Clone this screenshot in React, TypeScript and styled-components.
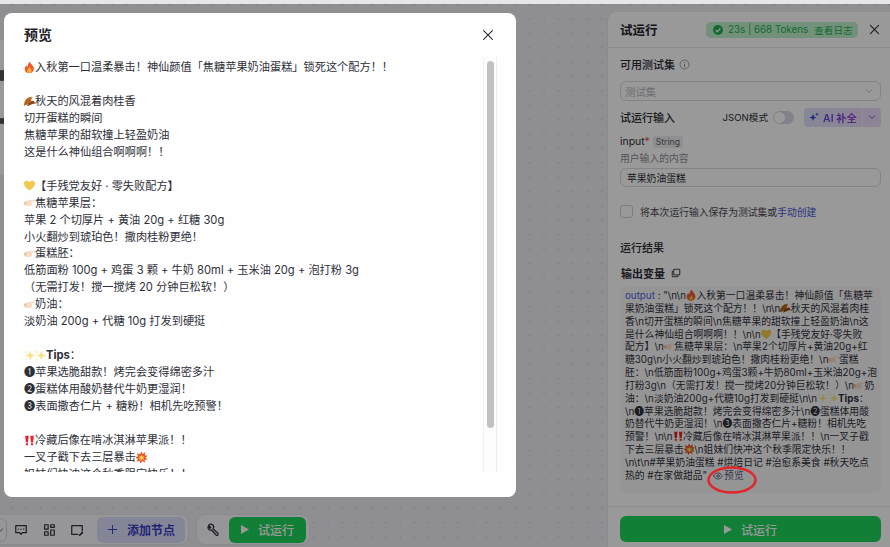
import { FC, ReactNode } from 'react'
import styled, { createGlobalStyle } from 'styled-components'

const FONT = `Inter, "Noto Sans CJK SC", sans-serif`

const GlobalStyle = createGlobalStyle`
  html, body { margin: 0; padding: 0; height: 100%; overflow: hidden; }
  body { font-family: ${FONT}; color: #1f2329; }
  * { box-sizing: border-box; }
`

const Page = styled.div`
  position: relative;
  width: 890px;
  height: 547px;
  overflow: hidden;
  background-color: #eeeef2;
  background-image: radial-gradient(#c9c9d2 0.8px, transparent 1px);
  background-size: 14.4px 14.4px;
  background-position: 4.4px 7.8px;
  border-top: 4px solid #e6e6ea;
  display: flex;
  justify-content: space-between;
  align-items: flex-end;
`

// the node that sits mostly under the modal, only its right edge shows
const CanvasNode = styled.div`
  position: absolute;
  left: -150px;
  top: 36px;
  width: 160px;
  height: 135px;
  background: #fff;
  border-radius: 6px;
`

const NodeMark = styled.span<{ $top: number; $h: number }>`
  position: absolute;
  right: 6px;
  top: ${p => p.$top}px;
  width: 4px;
  height: ${p => p.$h}px;
  background: #55565c;
  border-radius: 1px;
`

const BottomBar = styled.div`
  display: flex;
  gap: 7px;
  height: 31px;
  margin: auto 0 2px -34px;
`

const BarGroup = styled.div<{ $gap: number }>`
  display: flex;
  align-items: center;
  gap: ${p => p.$gap}px;
  padding: 0 3px 0 8px;
  background: #fbfbfd;
  border: 1px solid #e6e6ec;
  border-radius: 9px;
`

const ToolIcon = styled.span`
  display: inline-flex;
  width: 16px;
  justify-content: center;
  color: #30323a;
`

const ZoomStub = styled.span`
  width: 32px;
  height: 24px;
  margin-right: -6px;
  border: 1px solid #d8d8de;
  border-radius: 6px;
  display: flex;
  align-items: center;
  justify-content: flex-end;
  padding-right: 2px;
`

const AddNode = styled.button`
  width: 88px;
  height: 26px;
  border: none;
  border-radius: 6px;
  background: #dcdefb;
  color: #3a3fc4;
  font: 600 12px ${FONT};
  display: flex;
  align-items: center;
  justify-content: center;
  gap: 9px;
`

const RunButton = styled.button<{ $wide?: boolean }>`
  width: ${p => (p.$wide ? '261px' : '77px')};
  height: 26px;
  border: none;
  border-radius: 6px;
  background: #1fd45c;
  color: #fff;
  font: 500 12px ${FONT};
  display: flex;
  align-items: center;
  justify-content: center;
  gap: 9px;
`

const Panel = styled.aside`
  width: 283px;
  height: 535px;
  background: #fff;
  border-radius: 9px 0 0 0;
  border-left: 1px solid #e8e8ee;
  display: flex;
  flex-direction: column;
`

const PanelHeader = styled.header`
  height: 36px;
  flex: none;
  display: flex;
  align-items: center;
  padding: 0 9px 0 12px;
  border-bottom: 1px solid #ececf1;
`

const PanelTitle = styled.h2`
  flex: 1;
  margin: 0;
  font-size: 12.5px;
  font-weight: 600;
`

const StatusBadge = styled.div`
  width: 152px;
  height: 16px;
  margin-right: 10px;
  padding-left: 7px;
  border-radius: 5px;
  background: #c0f0cc;
  color: #22b350;
  font-size: 9.8px;
  display: flex;
  align-items: center;
  gap: 5px;
  white-space: nowrap;
`

const LogLink = styled.span`
  margin-left: 1px;
  font-size: 9.6px;
`

const PanelBody = styled.div`
  flex: 1;
  padding: 0 9px 0 12px;
  display: flex;
  flex-direction: column;
`

const SectionRow = styled.div<{ $top?: number }>`
  display: flex;
  align-items: center;
  margin-top: ${p => p.$top ?? 0}px;
  height: 18px;
`

const SectionLabel = styled.span`
  font-size: 11px;
  font-weight: 500;
  color: #2b2e36;
`

const InfoIcon = styled.svg`
  margin-left: 4px;
`

const SelectBox = styled.div`
  margin-top: 8px;
  height: 20px;
  border: 1px solid #dcdce2;
  border-radius: 6px;
  padding: 0 6px 0 4px;
  display: flex;
  align-items: center;
  justify-content: space-between;
  font-size: 10.4px;
  color: #b4b5bb;
`

const JsonLabel = styled.span`
  margin-left: auto;
  font-size: 9.6px;
  color: #2b2e36;
`

const Toggle = styled.span`
  position: relative;
  width: 21px;
  height: 13px;
  margin: 0 10px 0 5px;
  border-radius: 7px;
  background: #d6d8e6;

  &::after {
    content: '';
    position: absolute;
    left: 1px;
    top: 1px;
    width: 11px;
    height: 11px;
    border-radius: 50%;
    background: #fff;
  }
`

const AiButton = styled.div`
  width: 77px;
  height: 19px;
  display: flex;
  align-items: center;
  border-radius: 4px;
  overflow: hidden;
  background: linear-gradient(90deg, #dfe1fb, #ecdcf8);
  font-size: 10.4px;
  font-weight: 600;
`

const AiLabel = styled.span`
  flex: 1;
  display: flex;
  align-items: center;
  justify-content: center;
  gap: 4px;
  height: 100%;
  background: linear-gradient(90deg, #3a45d8, #a03fd8);
  -webkit-background-clip: text;
  color: transparent;
`

const AiCaret = styled.span`
  width: 19px;
  height: 100%;
  border-left: 1px solid #f3ecfb;
  display: flex;
  align-items: center;
  justify-content: center;
  color: #8440d0;
`

const FieldName = styled.div`
  margin-top: 9px;
  display: flex;
  align-items: center;
  height: 13px;
  font-size: 10.4px;
  color: #2b2e36;
`

const Required = styled.span`
  color: #e5484d;
  margin-right: 3px;
`

const TypeTag = styled.span`
  padding: 1px 3px;
  border-radius: 3px;
  background: #eeeef2;
  color: #5e6068;
  font-size: 8.6px;
`

const FieldHint = styled.div`
  margin-top: 4px;
  height: 13px;
  line-height: 13px;
  font-size: 9.8px;
  color: #8d8e96;
`

const TextInput = styled.div`
  margin-top: 3px;
  height: 19px;
  padding-left: 6px;
  border: 1px solid #dcdce2;
  border-radius: 6px;
  display: flex;
  align-items: center;
  font-size: 9.8px;
  color: #2b2e36;
`

const CheckRow = styled.label`
  margin-top: 18px;
  height: 13px;
  display: flex;
  align-items: center;
  gap: 7px;
  font-size: 9.8px;
  color: #4a4c55;
`

const CheckBox = styled.span`
  width: 13px;
  height: 13px;
  border: 1px solid #cfcfd6;
  border-radius: 3px;
`

const TextLink = styled.span`
  color: #4a50d8;
`

const OutputTitle = styled.div`
  margin: 9px 0 0 1px;
  height: 16px;
  display: flex;
  align-items: center;
  gap: 6px;
  font-size: 11px;
  font-weight: 600;
  color: #2b2e36;
`

const OutputBox = styled.div`
  margin-top: 6px;
  height: 206px;
  padding: 3px 4px 0 5px;
  background: #f9f9fb;
  border-radius: 7px;
  font-size: 9.8px;
  line-height: 12.85px;
  color: #30323a;
  white-space: nowrap;
`

const OutputKey = styled.span`
  color: #5058e0;
`

const PreviewLink = styled.span`
  display: inline-flex;
  align-items: center;
  gap: 1px;
  margin-left: 6px;
  color: #5a5c78;
  vertical-align: top;
`

const PanelFooter = styled.footer`
  height: 41px;
  flex: none;
  margin-top: auto;
  padding: 9px 9px 0 12px;
  border-top: 1px solid #ececf1;
`

const Overlay = styled.div`
  position: absolute;
  inset: 0;
  background: rgba(0, 0, 0, 0.4);
`

const Modal = styled.section`
  position: absolute;
  left: 4px;
  top: 9px;
  width: 512px;
  height: 484px;
  padding: 11px 19px 25px 20px;
  background: #fefeff;
  border-radius: 8px;
  display: flex;
  flex-direction: column;
`

const ModalHead = styled.div`
  height: 20px;
  padding-right: 2px;
  display: flex;
  align-items: center;
  justify-content: space-between;
`

const ModalTitle = styled.h1`
  margin: 0;
  font-size: 14px;
  font-weight: 600;
  color: #1f2329;
`

const CloseBtn = styled.span`
  display: inline-flex;
  color: #30323a;
`

const ModalClose = styled(CloseBtn)`
  margin-top: 2px;
`

const ModalBody = styled.div`
  position: relative;
  flex: 1;
  min-height: 0;
  margin-top: 15px;
`

const PreviewText = styled.div`
  height: 100%;
  overflow: hidden;
  font-size: 11.2px;
  line-height: 16.95px;
  color: #2e3038;
`

const TextLine = styled.div`
  min-height: 16.95px;
  white-space: nowrap;
`

const ScrollTrack = styled.div`
  position: absolute;
  right: 0;
  top: -2px;
  bottom: 0;
  width: 14px;
  padding: 4px 2px 0 3px;
  background: #fdfdfe;
  border-left: 1px solid #f0f0f3;
  border-right: 1px solid #f0f0f3;
`

const ScrollThumb = styled.div`
  height: 367px;
  background: #c1c1c3;
  border-radius: 4px;
`

const Annotation = styled.svg`
  position: absolute;
  left: 703px;
  top: 458px;
`

const EmojiBox = styled.svg<{ $size: number }>`
  display: inline-block;
  width: ${p => p.$size}px;
  height: ${p => p.$size}px;
  vertical-align: -0.16em;
`

const emojiArt: Record<string, ReactNode> = {
  fire: (
    <>
      <path d="M8.500 .5c.4 2.800 4.500 4.500 5 8.500.4 3.500-2.500 6.500-6 6.500S1.800 12.500 2 9.500c.1-1.800 1-3.400 2.200-4.500.2 1.200.7 2 1.500 2.300C5.500 5 6.500 2.300 8.500 .5z" fill="#f0592a" />
      <path d="M8 7.500c.4 1.400 2.600 2.200 2.600 4.300 0 1.700-1.300 3.700-2.800 3.700s-2.600-1.600-2.600-3.300C5.200 10.300 7.500 9.200 8 7.500z" fill="#fbb13c" />
    </>
  ),
  leaf: (
    <>
      <path d="M1 13C1 7 5 2 11 2c0 5-4 11-10 11z" fill="#b5651d" />
      <path d="M5 14c1-4 4-7 7-7 2 0 3 2 3 4-3-1-6 2-10 3z" fill="#8a4a1c" />
      <path d="M8 4c1-1 3-2 4-1-1 1-2 2-4 1z" fill="#d98a2b" />
    </>
  ),
  heart: (
    <path d="M8 14.500C3.500 11 1 8.500 1 5.500 1 3.300 2.700 2 4.500 2 6 2 7.300 2.800 8 4c.7-1.200 2-2 3.500-2C13.300 2 15 3.300 15 5.500c0 3-2.500 5.500-7 9z" fill="#f2c94c" />
  ),
  hand: (
    <>
      <path d="M1 8.500C1 7 2.500 6.300 4 6l5-1.500h5.500c.7 0 .7 1.500 0 1.500H10l1 1.500v3c0 1-1 1.800-2 1.800H5c-2.500 0-4-1.800-4-3.800z" fill="#f7dcc4" />
      <path d="M1 8.500C1 7 2.500 6.300 4 6l-.5 5.600C2 11 1 10 1 8.500z" fill="#eec09c" />
    </>
  ),
  spark: (
    <>
      <path d="M9 2l1.500 4.500L15 8l-4.500 1.500L9 14 7.500 9.500 3 8l4.500-1.500z" fill="#f8e27c" />
      <path d="M3.500 1l.6 1.900L6 3.500l-1.900.6L3.500 6l-.6-1.900L1 3.500l1.900-.6zM3.500 11l.5 1.500 1.500.5-1.500.5-.5 1.500-.5-1.500L1.500 13l1.500-.5z" fill="#f8ecac" />
    </>
  ),
  bang: <path d="M2.500 2h4.500l-.9 8.500H3.400zM9 2h4.500l-.9 8.500H9.900zM3.400 11.500h2.700V14H3.400zM9.900 11.500h2.700V14H9.900z" fill="#e0262a" />,
  boom: (
    <>
      <path d="M8 0l1.500 3.500L13 1l-.8 4 3.800.500-3 2.500 3 3-4-.2.5 4-3.500-2.300L6.500 16 5.500 12l-4 1.500 2-3.500L0 8l3.500-1.500L2 2.500l4 1.300z" fill="#e85a2a" />
      <path d="M8 4.500l1 2.200 2.500-.4-1.300 2.200 1.300 2-2.400-.3L8 12l-1-1.900-2.300.4 1.100-2.100-1.100-2 2.400.3z" fill="#f8d24c" />
    </>
  ),
}

const Emoji: FC<{ name: string; size: number }> = ({ name, size }) => (
  <EmojiBox $size={size} viewBox="1 1 14 14">
    {emojiArt[name]}
  </EmojiBox>
)

// :name: in a line of copy turns into a drawn emoji
const Rich: FC<{ text: string; size: number }> = ({ text, size }) => (
  <>
    {text.split(/(:[a-z]+:|Tips)/).map((part, i) => {
      if (part === 'Tips') return <strong key={i}>Tips</strong>
      if (/^:[a-z]+:$/.test(part)) return <Emoji key={i} name={part.slice(1, -1)} size={size} />
      return part
    })}
  </>
)

const previewLines = [
  ':fire:入秋第一口温柔暴击！神仙颜值「焦糖苹果奶油蛋糕」锁死这个配方！！',
  '',
  ':leaf:秋天的风混着肉桂香',
  '切开蛋糕的瞬间',
  '焦糖苹果的甜软撞上轻盈奶油',
  '这是什么神仙组合啊啊啊！！',
  '',
  ':heart:【手残党友好 · 零失败配方】',
  ':hand:焦糖苹果层：',
  '苹果 2 个切厚片 + 黄油 20g + 红糖 30g',
  '小火翻炒到琥珀色！撒肉桂粉更绝！',
  ':hand:蛋糕胚：',
  '低筋面粉 100g + 鸡蛋 3 颗 + 牛奶 80ml + 玉米油 20g + 泡打粉 3g',
  '（无需打发！搅一搅烤 20 分钟巨松软！）',
  ':hand:奶油：',
  '淡奶油 200g + 代糖 10g 打发到硬挺',
  '',
  ':spark::spark:Tips：',
  '❶苹果选脆甜款！烤完会变得绵密多汁',
  '❷蛋糕体用酸奶替代牛奶更湿润！',
  '❸表面撒杏仁片 + 糖粉！相机先吃预警！',
  '',
  ':bang:冷藏后像在啃冰淇淋苹果派！！',
  '一叉子戳下去三层暴击:boom:',
  '姐妹们快冲这个秋季限定快乐！！',
]

const outputLines = [
  '"\\n\\n:fire:入秋第一口温柔暴击！神仙颜值「焦糖苹',
  '果奶油蛋糕」锁死这个配方！！\\n\\n:leaf:秋天的风混着肉桂',
  '香\\n切开蛋糕的瞬间\\n焦糖苹果的甜软撞上轻盈奶油\\n这',
  '是什么神仙组合啊啊啊！！\\n\\n:heart:【手残党友好·零失败',
  '配方】\\n:hand:焦糖苹果层：\\n苹果2个切厚片+黄油20g+红',
  '糖30g\\n小火翻炒到琥珀色！撒肉桂粉更绝！\\n:hand:蛋糕',
  '胚：\\n低筋面粉100g+鸡蛋3颗+牛奶80ml+玉米油20g+泡',
  '打粉3g\\n（无需打发！搅一搅烤20分钟巨松软！）\\n:hand:奶',
  '油：\\n淡奶油200g+代糖10g打发到硬挺\\n\\n:spark::spark:Tips：',
  '\\n❶苹果选脆甜款！烤完会变得绵密多汁\\n❷蛋糕体用酸',
  '奶替代牛奶更湿润！\\n❸表面撒杏仁片+糖粉！相机先吃',
  '预警！\\n\\n:bang:冷藏后像在啃冰淇淋苹果派！！\\n一叉子戳',
  '下去三层暴击:boom:\\n姐妹们快冲这个秋季限定快乐！！',
  '\\n\\t\\n#苹果奶油蛋糕 #烘焙日记 #治愈系美食 #秋天吃点',
]

const Stroke: FC<{ size?: number; children: ReactNode }> = ({ size = 14, children }) => (
  <svg width={size} height={size} viewBox="0 0 16 16" fill="none" stroke="currentColor" strokeWidth="1.4" strokeLinecap="round" strokeLinejoin="round">
    {children}
  </svg>
)

const Cross: FC<{ size: number }> = ({ size }) => (
  <Stroke size={size}>
    <path d="M3 3l10 10M13 3L3 13" />
  </Stroke>
)

const Caret: FC = () => (
  <Stroke size={10}>
    <path d="M3.500 6l4.500 4.500L12.500 6" />
  </Stroke>
)

const Play: FC = () => (
  <svg width="8" height="9" viewBox="0 0 8 9">
    <path d="M0 0l8 4.500L0 9z" fill="#fff" />
  </svg>
)

export default function App() {
  return (
    <Page>
      <GlobalStyle />
      <CanvasNode>
        <NodeMark $top={30} $h={11} />
        <NodeMark $top={78} $h={6} />
      </CanvasNode>
      <BottomBar>
        <BarGroup $gap={12}>
          <ZoomStub>
            <Stroke size={8}>
              <path d="M3 6l5 5 5-5" />
            </Stroke>
          </ZoomStub>
          <ToolIcon>
            <Stroke>
              <path d="M2 3h12v8H9.500L8 13l-1.500-2H2z" />
              <path d="M5 7h.1M8 7h.1M11 7h.1" />
            </Stroke>
          </ToolIcon>
          <ToolIcon>
            <Stroke>
              <rect x="3" y="2" width="4" height="5" />
              <rect x="10" y="2" width="4" height="3" />
              <rect x="3" y="10" width="4" height="4" />
              <rect x="10" y="8" width="4" height="6" />
            </Stroke>
          </ToolIcon>
          <ToolIcon>
            <Stroke>
              <path d="M9 13H2V3h12v6" />
              <path d="M11 14l3-3" strokeWidth="2" />
            </Stroke>
          </ToolIcon>
          <AddNode>
            <Stroke size={11}>
              <path d="M8 2v12M2 8h12" />
            </Stroke>
            添加节点
          </AddNode>
        </BarGroup>
        <BarGroup $gap={8}>
          <ToolIcon>
            <Stroke>
              <path d="M3 2.500l2.500 2.500-1 1L2.500 4a3 3 0 0 0 3.800 4l5.200 5.700a1.300 1.300 0 0 0 2-2L8 6.500A3 3 0 0 0 3 2.500z" />
            </Stroke>
          </ToolIcon>
          <RunButton>
            <Play />
            试运行
          </RunButton>
        </BarGroup>
      </BottomBar>

      <Panel>
        <PanelHeader>
          <PanelTitle>试运行</PanelTitle>
          <StatusBadge>
            <svg width="10" height="10" viewBox="0 0 10 10">
              <circle cx="5" cy="5" r="5" fill="#22b350" />
              <path d="M2.700 5.200l1.600 1.500 3-3.200" fill="none" stroke="#fff" strokeWidth="1.200" />
            </svg>
            23s | 668 Tokens
            <LogLink>查看日志</LogLink>
          </StatusBadge>
          <CloseBtn>
            <Cross size={13} />
          </CloseBtn>
        </PanelHeader>
        <PanelBody>
          <SectionRow $top={7}>
            <SectionLabel>可用测试集</SectionLabel>
            <InfoIcon width="11" height="11" viewBox="0 0 11 11">
              <circle cx="5.500" cy="5.500" r="4.500" fill="none" stroke="#8d8e96" strokeWidth="0.8" />
              <path d="M5.500 5v3M5.500 3v1" stroke="#8d8e96" strokeWidth="0.9" />
            </InfoIcon>
          </SectionRow>
          <SelectBox>
            测试集
            <Caret />
          </SelectBox>
          <SectionRow $top={7}>
            <SectionLabel>试运行输入</SectionLabel>
            <JsonLabel>JSON模式</JsonLabel>
            <Toggle />
            <AiButton>
              <AiLabel>
                <svg width="10" height="10" viewBox="0 0 10 10">
                  <path d="M4 2l1 2.500L7.500 5.500 5 6.500 4 9 3 6.500.5 5.500 3 4.500zM8 .5l.5 1.300L10 2.300l-1.500.5L8 4l-.5-1.200L6 2.300l1.500-.5z" fill="#3a45d8" />
                </svg>
                AI 补全
              </AiLabel>
              <AiCaret>
                <Caret />
              </AiCaret>
            </AiButton>
          </SectionRow>
          <FieldName>
            input<Required>*</Required>
            <TypeTag>String</TypeTag>
          </FieldName>
          <FieldHint>用户输入的内容</FieldHint>
          <TextInput>苹果奶油蛋糕</TextInput>
          <CheckRow>
            <CheckBox />
            <span>
              将本次运行输入保存为测试集或<TextLink>手动创建</TextLink>
            </span>
          </CheckRow>
          <SectionRow $top={20}>
            <SectionLabel>运行结果</SectionLabel>
          </SectionRow>
          <OutputTitle>
            输出变量
            <Stroke size={10}>
              <rect x="5" y="2" width="9" height="9" />
              <path d="M3 5H2v9h9v-2" />
            </Stroke>
          </OutputTitle>
          <OutputBox>
            {outputLines.map((line, i) => (
              <div key={i}>
                {i === 0 && <OutputKey>output</OutputKey>}
                {i === 0 && ' : '}
                <Rich text={line} size={10.5} />
              </div>
            ))}
            <div>
              热的 #在家做甜品"
              <PreviewLink>
                <Stroke size={10}>
                  <path d="M1 8s2.500-5 7-5 7 5 7 5-2.500 5-7 5-7-5-7-5z" />
                  <circle cx="8" cy="8" r="2" />
                </Stroke>
                预览
              </PreviewLink>
            </div>
          </OutputBox>
        </PanelBody>
        <PanelFooter>
          <RunButton $wide>
            <Play />
            试运行
          </RunButton>
        </PanelFooter>
      </Panel>

      <Overlay />

      <Modal>
        <ModalHead>
          <ModalTitle>预览</ModalTitle>
          <ModalClose>
            <Cross size={14} />
          </ModalClose>
        </ModalHead>
        <ModalBody>
          <PreviewText>
            {previewLines.map((line, i) => (
              <TextLine key={i}>
                <Rich text={line} size={11} />
              </TextLine>
            ))}
          </PreviewText>
          <ScrollTrack>
            <ScrollThumb />
          </ScrollTrack>
        </ModalBody>
      </Modal>

      <Annotation width="58" height="36" viewBox="0 0 58 36">
        <ellipse cx="29" cy="18" rx="23.500" ry="12.500" fill="none" stroke="#e0262a" strokeWidth="2.500" />
      </Annotation>
    </Page>
  )
}
